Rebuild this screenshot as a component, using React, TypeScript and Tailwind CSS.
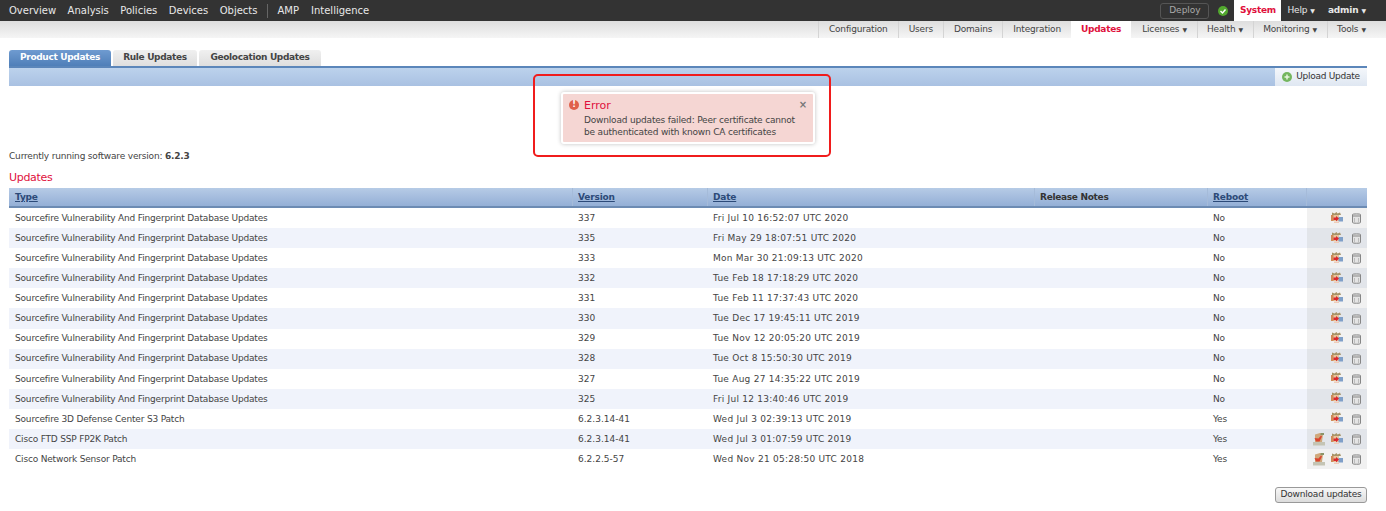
type Row = [string, string, string, string];

const vdb = "Sourcefire Vulnerability And Fingerprint Database Updates";
const rows: Row[] = [
  [vdb, "337", "Fri Jul 10 16:52:07 UTC 2020", "No"],
  [vdb, "335", "Fri May 29 18:07:51 UTC 2020", "No"],
  [vdb, "333", "Mon Mar 30 21:09:13 UTC 2020", "No"],
  [vdb, "332", "Tue Feb 18 17:18:29 UTC 2020", "No"],
  [vdb, "331", "Tue Feb 11 17:37:43 UTC 2020", "No"],
  [vdb, "330", "Tue Dec 17 19:45:11 UTC 2019", "No"],
  [vdb, "329", "Tue Nov 12 20:05:20 UTC 2019", "No"],
  [vdb, "328", "Tue Oct 8 15:50:30 UTC 2019", "No"],
  [vdb, "327", "Tue Aug 27 14:35:22 UTC 2019", "No"],
  [vdb, "325", "Fri Jul 12 13:40:46 UTC 2019", "No"],
  ["Sourcefire 3D Defense Center S3 Patch", "6.2.3.14-41", "Wed Jul 3 02:39:13 UTC 2019", "Yes"],
  ["Cisco FTD SSP FP2K Patch", "6.2.3.14-41", "Wed Jul 3 01:07:59 UTC 2019", "Yes"],
  ["Cisco Network Sensor Patch", "6.2.2.5-57", "Wed Nov 21 05:28:50 UTC 2018", "Yes"],
];

const cols = "grid grid-cols-[564px_135px_327px_173px_99px_60px]";

function PackageIcon() {
  return (
    <svg width="12" height="12" viewBox="0 0 12 12" className="shrink-0 mb-[1px]">
      <path d="M1 .5l2.500 1L5.500 0l1 1.500L9 .5l1 2.500H1z" fill="#a89468" />
      <path d="M0 3h8v6H0z" fill="#e6c49c" />
      <path d="M0 3h2.500v6H0z" fill="#d08a58" />
      <path d="M7.500 5H12v4.500H7.500z" fill="#7f9fc8" />
      <path d="M2.500 5.500H5V4l3 2.500L5 9.500V8H2.500z" fill="#d9282f" />
      <path d="M3 9.500h5v1.500H3z" fill="#eecdb8" />
    </svg>
  );
}

function InstallIcon() {
  return (
    <svg width="12" height="13" viewBox="0 0 12 13" className="shrink-0">
      <path d="M0 9h12v3.500H0z" fill="#c4c4b4" />
      <path d="M2 1.500L7 0l3 1.500L9 9H2z" fill="#cfa87c" />
      <path d="M7.500 0H11v2H7.500z" fill="#8a9468" />
      <path d="M1.500 5l4 .5L8 2.500l1 1L6.500 8.500H3z" fill="#d9452f" />
    </svg>
  );
}

function TrashIcon() {
  return (
    <svg width="9" height="11" viewBox="0 0 9 11" fill="none" className="shrink-0 mt-[1px]">
      <path d="M.5 1.500C.5.700 8.500.700 8.500 1.500V9.500C8.500 10.500.5 10.500.5 9.500z" fill="#e4e4e4" stroke="#868686" />
      <path d="M1 3H8" stroke="#868686" />
      <path d="M2.500 5v4M6.500 5v4" stroke="#bdbdbd" />
    </svg>
  );
}

function Caret() {
  return <span className="ml-[3px] text-[6px] tracking-normal">▼</span>;
}

export default function App() {
  return (
    <div className="relative w-[1386px] h-[511px] overflow-hidden bg-white text-[#444] text-[9px] tracking-[-0.18px] font-['DejaVu_Sans',Verdana,sans-serif]">
      {/* top nav */}
      <div className="h-[21px] bg-[#333333] flex items-center justify-between text-[#e8e8e8] text-[10px] tracking-normal pl-[9px] pr-[20px]">
        <div className="flex items-center">
          <span className="mr-[11.5px]">Overview</span>
          <span className="mr-[11.5px]">Analysis</span>
          <span className="mr-[11.5px]">Policies</span>
          <span className="mr-[11.5px]">Devices</span>
          <span>Objects</span>
          <span className="w-px h-[14px] bg-[#666] mx-[9.5px]"></span>
          <span className="mr-[12px]">AMP</span>
          <span>Intelligence</span>
        </div>
        <div className="flex items-center h-full">
          <span className="w-[49px] h-[16px] flex items-center justify-center border border-[#555] rounded-[3px] text-[#aaa] text-[9px]">Deploy</span>
          <svg width="10" height="10" viewBox="0 0 10 10" className="ml-[9px]">
            <circle cx="5" cy="5" r="5" fill="#52a82e" />
            <path d="M2.500 5l2 2 3-3.500" stroke="#fff" strokeWidth="1.400" fill="none" />
          </svg>
          <span className="ml-[6px] w-[47px] h-full bg-white text-[#e0103c] font-bold text-[9px] tracking-[-0.3px] flex items-center justify-center">System</span>
          <span className="ml-[6px] text-[9px] tracking-[-0.18px]">Help<Caret /></span>
          <span className="ml-[13px] text-[9px] font-bold tracking-[-0.18px]">admin<Caret /></span>
        </div>
      </div>
      {/* sub nav */}
      <div className="h-[17px] bg-gradient-to-b from-[#dedede] to-[#f5f5f5] flex justify-end items-stretch pr-[10px]">
        <span className="px-2.5 flex items-center border-l border-[#d4d4d4]">Configuration</span>
        <span className="px-2.5 flex items-center border-l border-[#d4d4d4]">Users</span>
        <span className="px-2.5 flex items-center border-l border-[#d4d4d4]">Domains</span>
        <span className="px-2.5 flex items-center border-l border-[#d4d4d4]">Integration</span>
        <span className="px-2.5 flex items-center bg-white text-[#e0103c] font-bold tracking-[-0.25px]">Updates</span>
        <span className="pl-[11px] pr-2.5 flex items-center">Licenses<Caret /></span>
        <span className="pl-[9px] pr-2.5 flex items-center border-l border-[#d4d4d4]">Health<Caret /></span>
        <span className="pl-[9px] pr-2.5 flex items-center border-l border-[#d4d4d4]">Monitoring<Caret /></span>
        <span className="pl-[9px] pr-2.5 flex items-center border-l border-[#d4d4d4]">Tools<Caret /></span>
      </div>

      <div className="pl-[9px] pr-[19px]">
        {/* tabs */}
        <div className="flex gap-[2px] pt-[12px] h-[28px] font-bold tracking-[-0.33px]">
          <span className="w-[102px] flex items-center justify-center rounded-t-[3px] bg-gradient-to-b from-[#6f9bd0] to-[#4f7fb8] text-white">Product Updates</span>
          <span className="w-[84px] flex items-center justify-center rounded-t-[3px] bg-gradient-to-b from-[#f0f0f0] to-[#dedede]">Rule Updates</span>
          <span className="w-[122px] flex items-center justify-center rounded-t-[3px] bg-gradient-to-b from-[#f0f0f0] to-[#dedede]">Geolocation Updates</span>
        </div>
        <div className="h-[20px] border-t-2 border-[#5b86ba] bg-gradient-to-b from-[#bcd2ec] to-[#a9c1e2] flex justify-end">
          <span className="w-[92px] flex items-center justify-center gap-[4px] bg-gradient-to-b from-[#f4f7fb] to-[#dfe7f2] text-[#333] tracking-[-0.25px]">
            <svg width="10" height="10" viewBox="0 0 10 10">
              <circle cx="5" cy="5" r="5" fill="#74b65f" />
              <path d="M5 2.500v5M2.500 5h5" stroke="#e8f5e0" strokeWidth="1.500" />
            </svg>
            Upload Update
          </span>
        </div>

        <div className="mt-[64px] h-[12px] leading-[12px]">Currently running software version: <b>6.2.3</b></div>
        <div className="mt-[9px] h-[14px] leading-[14px] text-[11px] tracking-[-0.3px] text-[#e0103c]">Updates</div>

        {/* table */}
        <div className={`mt-[3px] h-[20px] ${cols} border-b-2 border-[#6c8bb3] bg-gradient-to-b from-[#b6cbe6] to-[#94afd6] font-bold text-[#2c4a78]`}>
          <span className="pl-[6px] pt-px flex items-center underline border-r border-[#a5bbd9]">Type</span>
          <span className="pl-[5px] pt-px flex items-center underline border-r border-[#a5bbd9]">Version</span>
          <span className="pl-[5px] pt-px flex items-center underline border-r border-[#a5bbd9]">Date</span>
          <span className="pl-[5px] pt-px flex items-center text-[#333] border-r border-[#a5bbd9] tracking-[-0.3px]">Release Notes</span>
          <span className="pl-[5px] pt-px flex items-center underline border-r border-[#a5bbd9]">Reboot</span>
          <span></span>
        </div>
        {rows.map((r, i) => (
          <div key={i} className={`h-[20.1px] ${cols} ${i % 2 ? "bg-[#f0f3fb]" : "bg-white"}`}>
            <span className="pl-[6px] pt-px flex items-center">{r[0]}</span>
            <span className="pl-[5px] pt-px flex items-center tracking-normal">{r[1]}</span>
            <span className="pl-[5px] pt-px flex items-center tracking-[0.25px]">{r[2]}</span>
            <span></span>
            <span className="pl-[5px] pt-px flex items-center">{r[3]}</span>
            <span className={`flex items-center justify-end pr-[6px] ${i % 2 ? "bg-[#e2e5ea]" : "bg-[#f1f1f1]"}`}>
              {i > 10 && <span className="mr-[6px] flex"><InstallIcon /></span>}
              <span className="mr-[9px] flex"><PackageIcon /></span>
              <TrashIcon />
            </span>
          </div>
        ))}

        <div className="mt-[18px] flex justify-end">
          <span className="w-[92px] h-[16px] flex items-center justify-center rounded-[3px] border border-[#999] bg-gradient-to-b from-[#f8f8f8] to-[#dcdcdc] text-[#333]">Download updates</span>
        </div>
      </div>

      {/* alert popup and the red box drawn around it */}
      <div className="absolute left-[533px] top-[74px] w-[298px] h-[83px] rounded-[5px] border-2 border-[#f01c1c]"></div>
      <div className="absolute left-[561px] top-[92px] w-[254px] h-[52px] bg-[#f5d6d3] border-2 border-white shadow-[0_0_4px_rgba(0,0,0,0.25)] rounded-[3px]">
        <div className="absolute left-[6px] top-[6px] w-[10px] h-[10px] rounded-full bg-[#e0604a] text-white text-[8px] leading-[10px] text-center font-bold">!</div>
        <div className="absolute left-[21px] top-[4px] text-[11px] tracking-normal text-[#e0103c]">Error</div>
        <div className="absolute right-[6px] top-[3px] text-[10px] font-bold text-[#777]">×</div>
        <div className="absolute left-[21px] top-[20px] leading-[12px] whitespace-nowrap">Download updates failed: Peer certificate cannot<br />be authenticated with known CA certificates</div>
      </div>
    </div>
  );
}
